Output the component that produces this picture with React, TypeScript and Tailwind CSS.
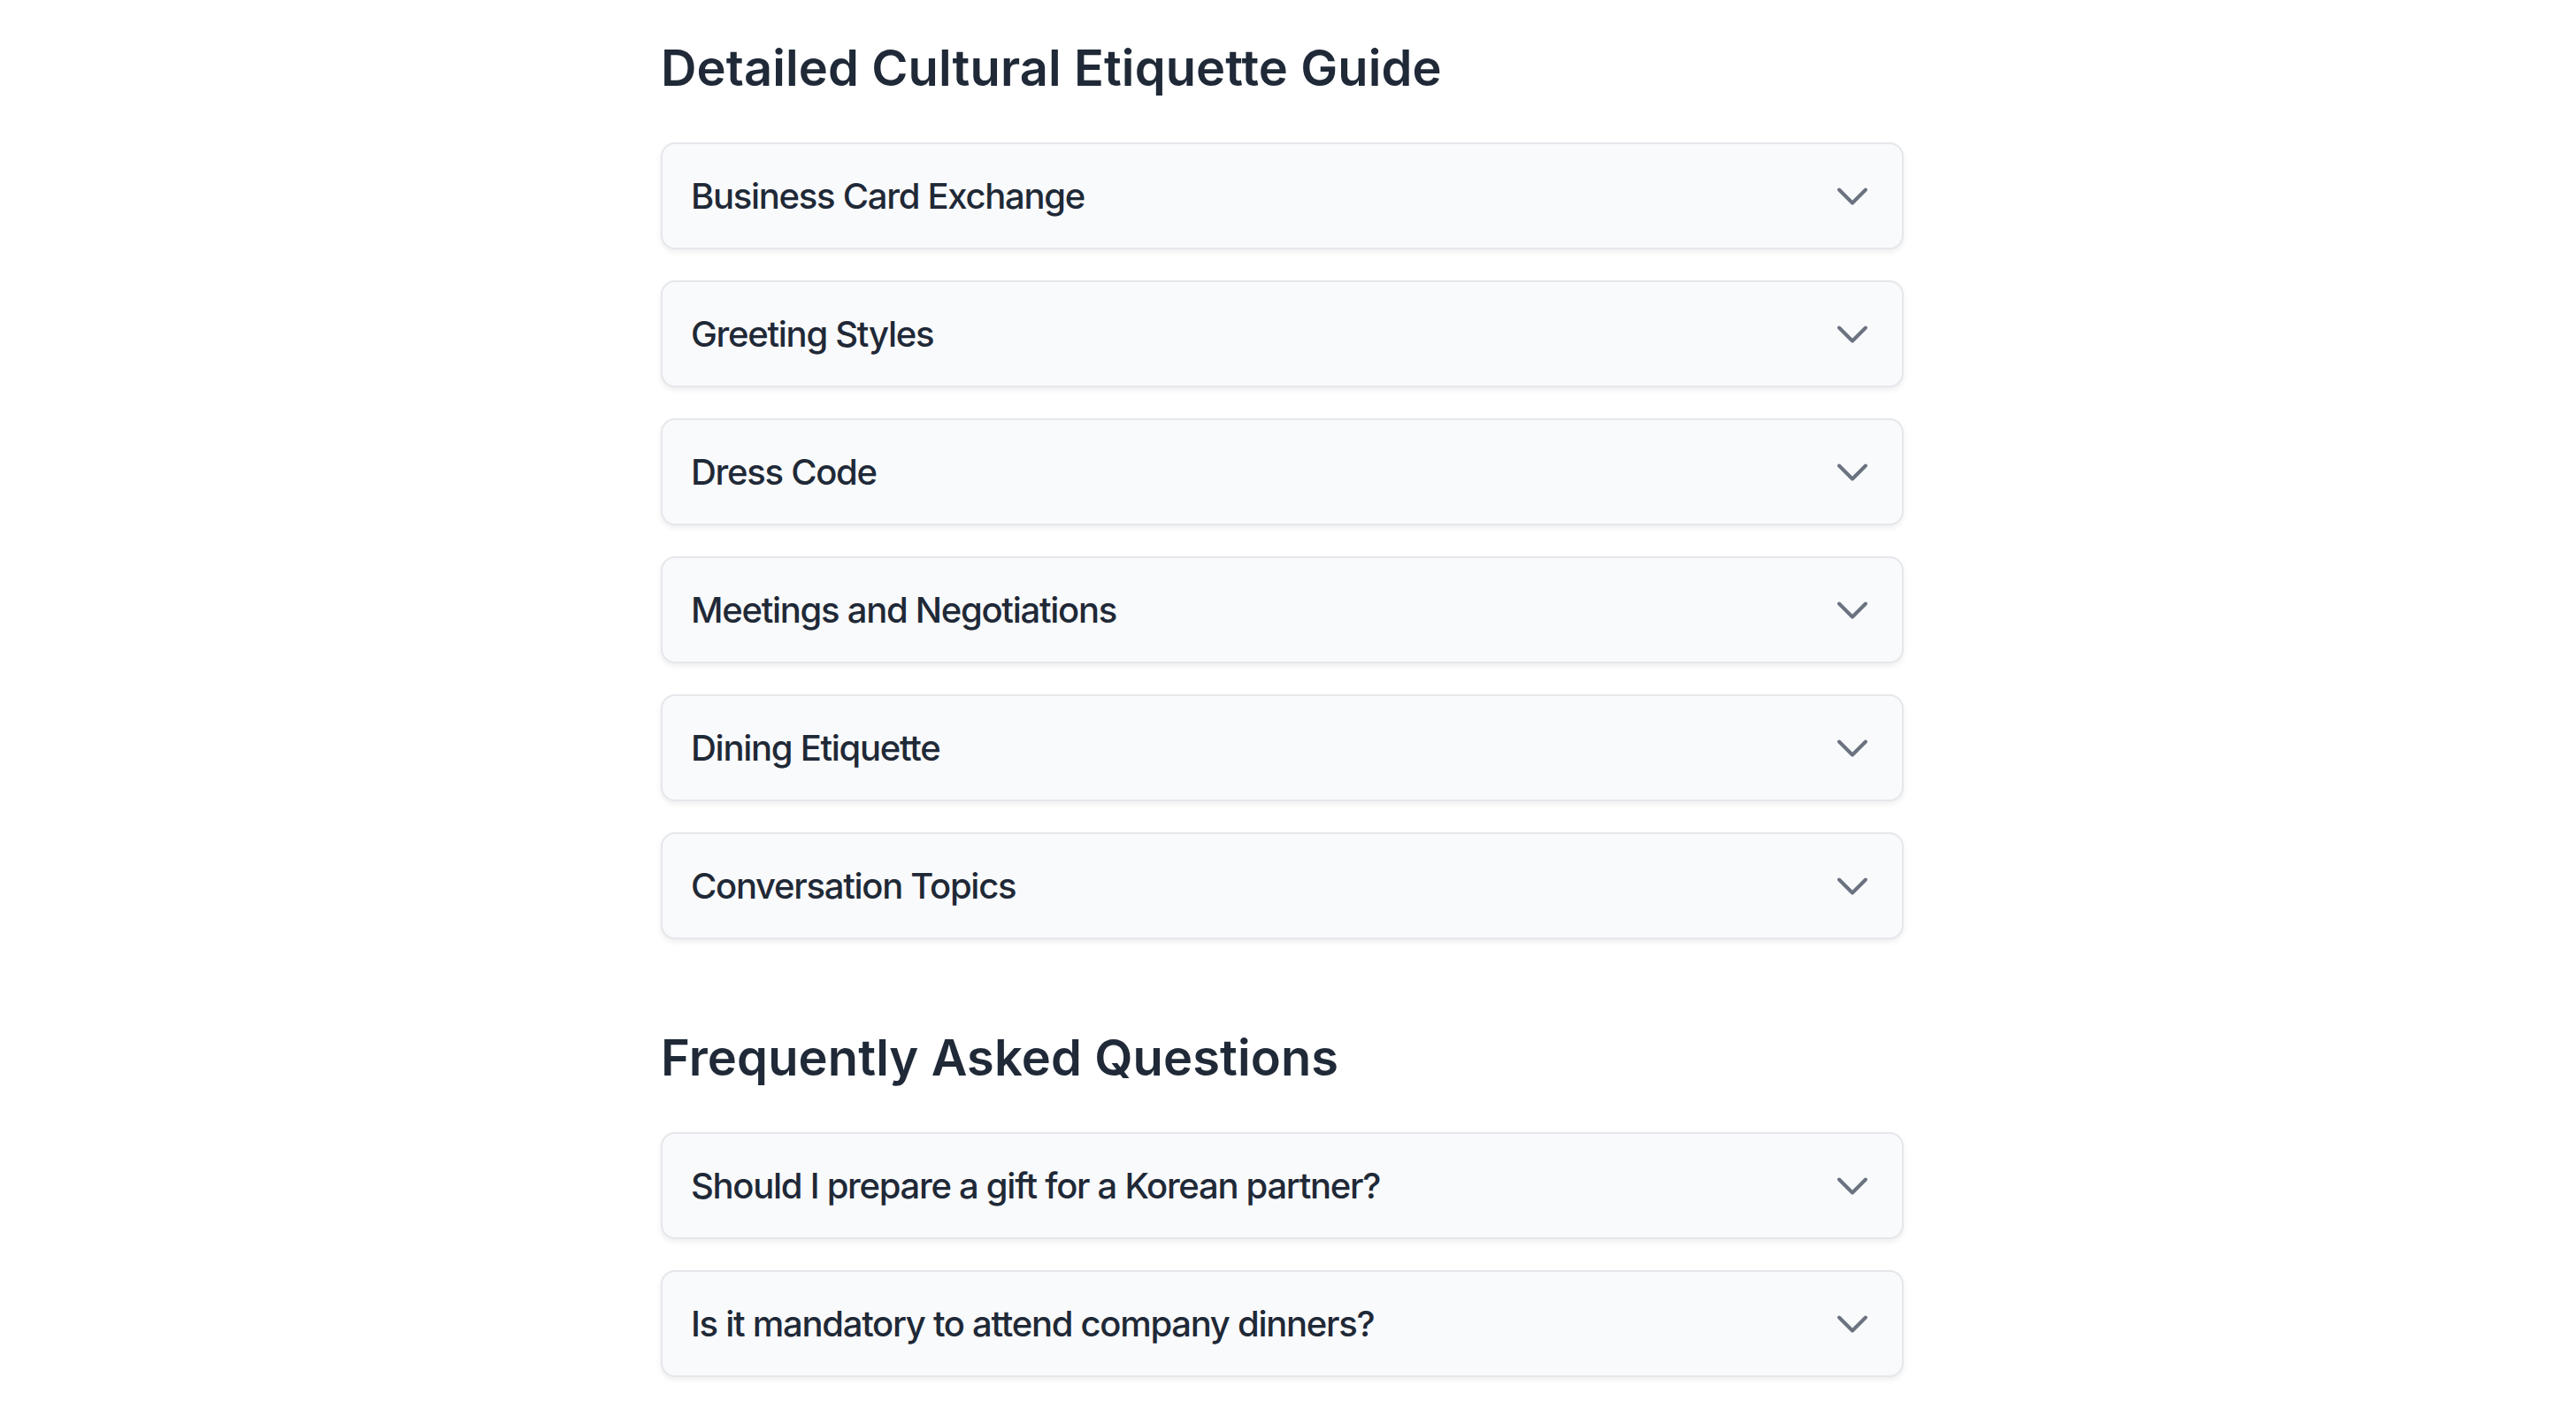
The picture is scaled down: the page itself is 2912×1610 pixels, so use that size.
import React from "react";

const guideTopics = [
  "Business Card Exchange",
  "Greeting Styles",
  "Dress Code",
  "Meetings and Negotiations",
  "Dining Etiquette",
  "Conversation Topics",
];

const faqs = [
  "Should I prepare a gift for a Korean partner?",
  "Is it mandatory to attend company dinners?",
];

function Chevron() {
  return (
    <svg
      width="48"
      height="48"
      viewBox="0 0 24 24"
      fill="none"
      stroke="#6b7280"
      strokeWidth={2}
      strokeLinecap="round"
      strokeLinejoin="round"
      className="shrink-0"
    >
      <path d="m19.5 8.25-7.5 7.5-7.5-7.5" />
    </svg>
  );
}

function AccordionItem({ title }: { title: string }) {
  return (
    <div className="flex items-center justify-between rounded-[16px] border-2 border-[#e5e7eb] bg-[#f9fafb] pl-[32px] pr-[32px] h-[121px] shadow-[0_3px_6px_rgba(0,0,0,0.07)]">
      <span className="text-[40px] leading-[56px] font-medium tracking-[-0.032em] text-[#1f2937]">{title}</span>
      <Chevron />
    </div>
  );
}

function Section({ heading, items, className }: { heading: string; items: string[]; className?: string }) {
  return (
    <section className={className}>
      <h2 className="text-[56px] leading-[72px] font-semibold tracking-[0.002em] text-[#1f2937] mb-[48px]">{heading}</h2>
      <div className="flex flex-col gap-[35px]">
        {items.map((t) => (
          <AccordionItem key={t} title={t} />
        ))}
      </div>
    </section>
  );
}

export default function App() {
  return (
    <div
      className="min-h-screen bg-white flex justify-center pr-[13px]"
      style={{ fontFamily: "Inter, 'Noto Sans', sans-serif" }}
    >
      <div className="w-[1405px] pt-[41px] pb-[52px]">
        <Section heading="Detailed Cultural Etiquette Guide" items={guideTopics} />
        <Section heading="Frequently Asked Questions" items={faqs} className="mt-[98px]" />
      </div>
    </div>
  );
}
